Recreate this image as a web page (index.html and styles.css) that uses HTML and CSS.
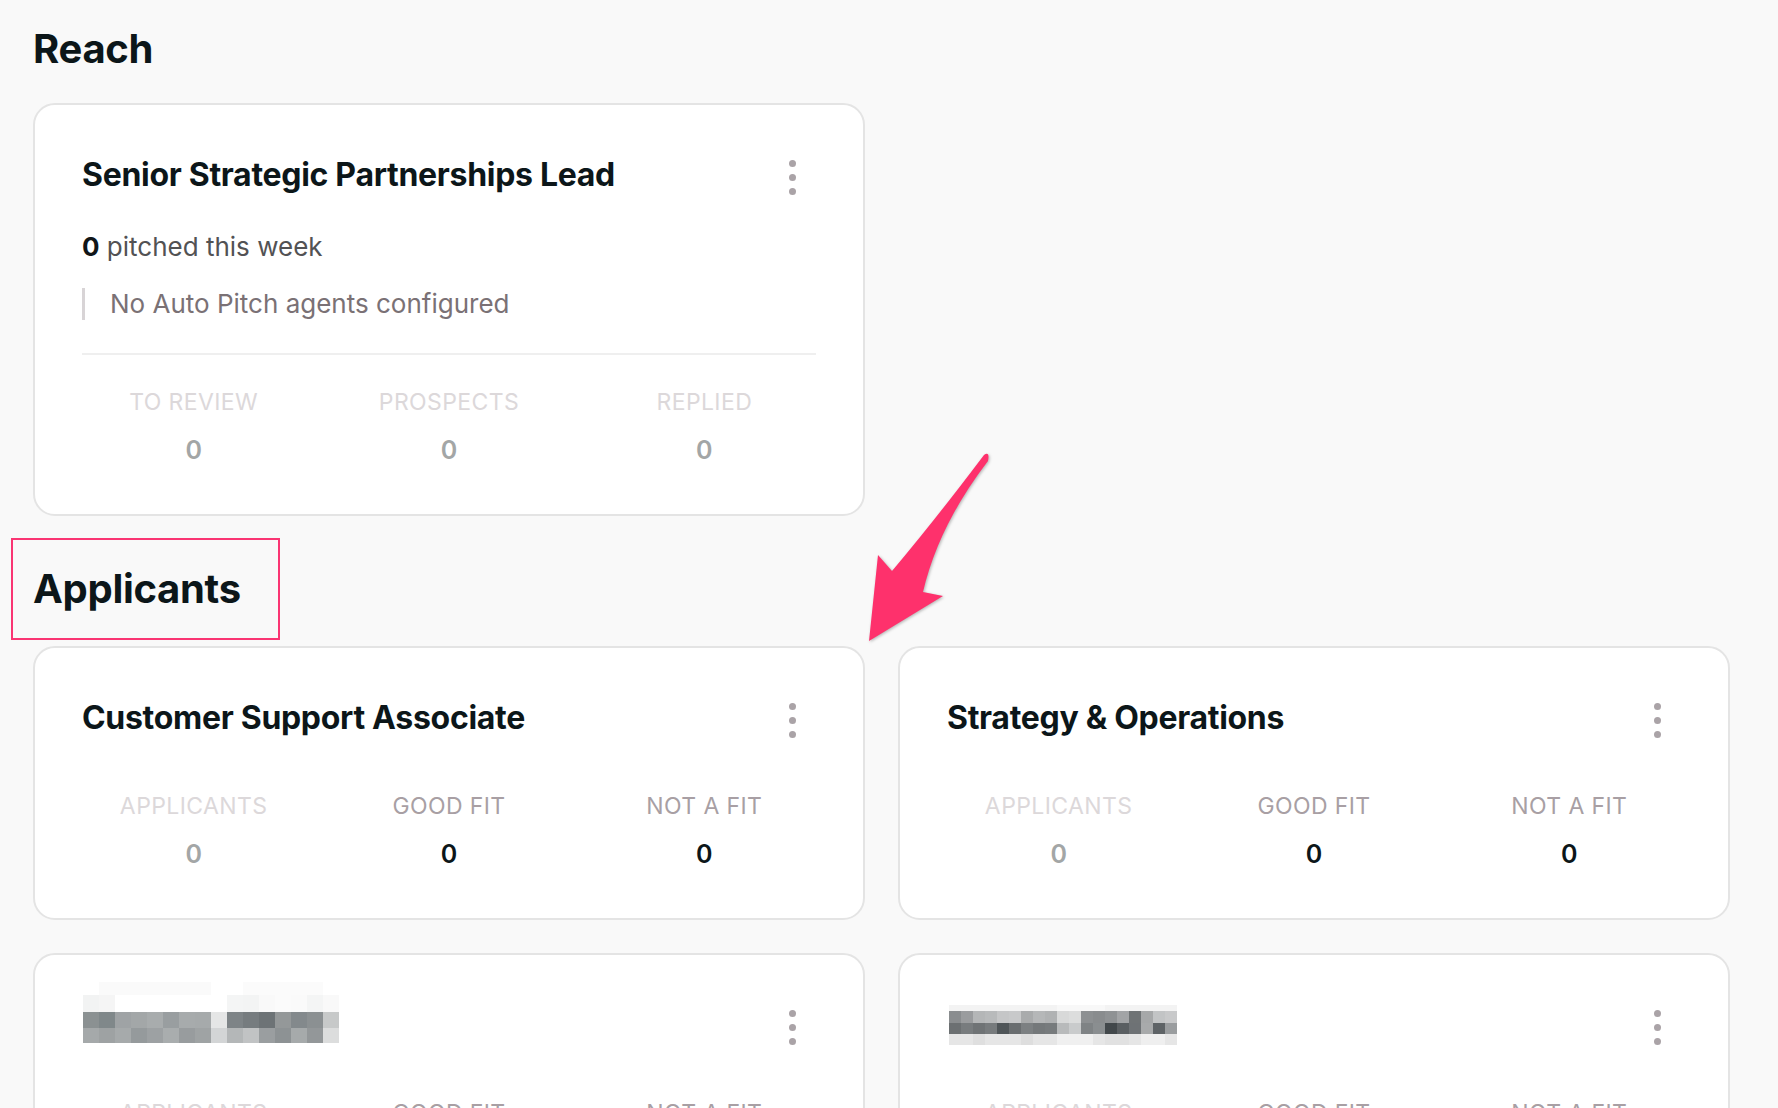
FILE: index.html
```html
<!DOCTYPE html>
<html lang="en">
<head>
<meta charset="utf-8">
<title>Jobs</title>
<link rel="stylesheet" href="styles.css">
</head>
<body>
<main class="page">
  <section class="section">
    <h2 class="section-title">Reach</h2>
    <div class="card-grid">
      <article class="card">
        <header class="card-head">
          <h3 class="card-title">Senior Strategic Partnerships Lead</h3>
          <button class="kebab" aria-label="More"><span></span><span></span><span></span></button>
        </header>
        <p class="pitched"><strong>0</strong> pitched this week</p>
        <p class="agents">No Auto Pitch agents configured</p>
        <hr class="divider">
        <div class="stats stats--divided">
          <div class="stat"><div class="stat-label">To Review</div><div class="stat-value">0</div></div>
          <div class="stat"><div class="stat-label">Prospects</div><div class="stat-value">0</div></div>
          <div class="stat"><div class="stat-label">Replied</div><div class="stat-value">0</div></div>
        </div>
      </article>
    </div>
  </section>

  <section class="section section--applicants">
    <div class="highlight">
      <h2 class="section-title section-title--flush">Applicants</h2>
    </div>
    <div class="card-grid">
      <article class="card">
        <header class="card-head">
          <h3 class="card-title">Customer Support Associate</h3>
          <button class="kebab" aria-label="More"><span></span><span></span><span></span></button>
        </header>
        <div class="stats">
          <div class="stat"><div class="stat-label">Applicants</div><div class="stat-value">0</div></div>
          <div class="stat"><div class="stat-label stat-label--strong">Good Fit</div><div class="stat-value stat-value--strong">0</div></div>
          <div class="stat"><div class="stat-label stat-label--strong">Not a Fit</div><div class="stat-value stat-value--strong">0</div></div>
        </div>
      </article>
      <article class="card">
        <header class="card-head">
          <h3 class="card-title">Strategy &amp; Operations</h3>
          <button class="kebab" aria-label="More"><span></span><span></span><span></span></button>
        </header>
        <div class="stats">
          <div class="stat"><div class="stat-label">Applicants</div><div class="stat-value">0</div></div>
          <div class="stat"><div class="stat-label stat-label--strong">Good Fit</div><div class="stat-value stat-value--strong">0</div></div>
          <div class="stat"><div class="stat-label stat-label--strong">Not a Fit</div><div class="stat-value stat-value--strong">0</div></div>
        </div>
      </article>
      <article class="card">
        <header class="card-head">
          <svg class="mosaic mosaic--left" width="256" height="64" viewBox="0 0 256 64" shape-rendering="crispEdges" aria-hidden="true">
            <rect x="16" y="3" width="112" height="13" fill="#fafafa"/>
            <rect x="160" y="3" width="80" height="13" fill="#fbfbfb"/>
            <rect x="0" y="16" width="16" height="17" fill="#f2f3f3"/>
            <rect x="16" y="16" width="16" height="17" fill="#f5f5f5"/>
            <rect x="144" y="16" width="16" height="17" fill="#f4f5f5"/>
            <rect x="160" y="16" width="16" height="17" fill="#f3f4f4"/>
            <rect x="176" y="16" width="16" height="17" fill="#f9f9f9"/>
            <rect x="192" y="16" width="16" height="17" fill="#fbfbfb"/>
            <rect x="208" y="16" width="16" height="17" fill="#fafafa"/>
            <rect x="224" y="16" width="16" height="17" fill="#f4f5f5"/>
            <rect x="240" y="16" width="16" height="17" fill="#f9f9f9"/>
            <rect x="0" y="33" width="16" height="16" fill="#8b9192"/>
            <rect x="16" y="33" width="16" height="16" fill="#80888a"/>
            <rect x="32" y="33" width="16" height="16" fill="#9fa3a5"/>
            <rect x="48" y="33" width="16" height="16" fill="#a3a7a8"/>
            <rect x="64" y="33" width="16" height="16" fill="#a8acad"/>
            <rect x="80" y="33" width="16" height="16" fill="#999ea0"/>
            <rect x="96" y="33" width="16" height="16" fill="#a7abac"/>
            <rect x="112" y="33" width="16" height="16" fill="#a6aaab"/>
            <rect x="128" y="33" width="16" height="16" fill="#e5e6e6"/>
            <rect x="144" y="33" width="16" height="16" fill="#7e8487"/>
            <rect x="160" y="33" width="16" height="16" fill="#767c7f"/>
            <rect x="176" y="33" width="16" height="16" fill="#6d7376"/>
            <rect x="192" y="33" width="16" height="16" fill="#949899"/>
            <rect x="208" y="33" width="16" height="16" fill="#83898c"/>
            <rect x="224" y="33" width="16" height="16" fill="#8b9092"/>
            <rect x="240" y="33" width="16" height="16" fill="#c7c9c9"/>
            <rect x="0" y="49" width="16" height="15" fill="#a5a9aa"/>
            <rect x="16" y="49" width="16" height="15" fill="#9ea2a3"/>
            <rect x="32" y="49" width="16" height="15" fill="#a6aaab"/>
            <rect x="48" y="49" width="16" height="15" fill="#959a9c"/>
            <rect x="64" y="49" width="16" height="15" fill="#9da1a3"/>
            <rect x="80" y="49" width="16" height="15" fill="#a9adae"/>
            <rect x="96" y="49" width="16" height="15" fill="#989c9e"/>
            <rect x="112" y="49" width="16" height="15" fill="#9fa3a4"/>
            <rect x="128" y="49" width="16" height="15" fill="#d3d5d6"/>
            <rect x="144" y="49" width="16" height="15" fill="#b4b7b8"/>
            <rect x="160" y="49" width="16" height="15" fill="#c1c3c4"/>
            <rect x="176" y="49" width="16" height="15" fill="#9a9ea0"/>
            <rect x="192" y="49" width="16" height="15" fill="#8d9294"/>
            <rect x="208" y="49" width="16" height="15" fill="#a6aaab"/>
            <rect x="224" y="49" width="16" height="15" fill="#939799"/>
            <rect x="240" y="49" width="16" height="15" fill="#dcdddd"/>
          </svg>
          <button class="kebab" aria-label="More"><span></span><span></span><span></span></button>
        </header>
        <div class="stats">
          <div class="stat"><div class="stat-label">Applicants</div><div class="stat-value">0</div></div>
          <div class="stat"><div class="stat-label stat-label--strong">Good Fit</div><div class="stat-value stat-value--strong">0</div></div>
          <div class="stat"><div class="stat-label stat-label--strong">Not a Fit</div><div class="stat-value stat-value--strong">0</div></div>
        </div>
      </article>
      <article class="card">
        <header class="card-head">
          <svg class="mosaic" width="228" height="40" viewBox="0 0 228 40" shape-rendering="crispEdges" aria-hidden="true">
            <rect x="0" y="0" width="228" height="6" fill="#f3f3f3"/>
            <rect x="108" y="0" width="48" height="6" fill="#f8f8f8"/>
            <rect x="0" y="6" width="12" height="12" fill="#8a8d8f"/>
            <rect x="12" y="6" width="12" height="12" fill="#9a9c9e"/>
            <rect x="24" y="6" width="12" height="12" fill="#b4b6b7"/>
            <rect x="36" y="6" width="12" height="12" fill="#b8babb"/>
            <rect x="48" y="6" width="12" height="12" fill="#c5c6c7"/>
            <rect x="60" y="6" width="12" height="12" fill="#c8c9ca"/>
            <rect x="72" y="6" width="12" height="12" fill="#a9abac"/>
            <rect x="84" y="6" width="12" height="12" fill="#b5b7b8"/>
            <rect x="96" y="6" width="12" height="12" fill="#b0b2b3"/>
            <rect x="108" y="6" width="12" height="12" fill="#d8d9d9"/>
            <rect x="120" y="6" width="12" height="12" fill="#dcdddd"/>
            <rect x="132" y="6" width="12" height="12" fill="#8d9092"/>
            <rect x="144" y="6" width="12" height="12" fill="#898c8e"/>
            <rect x="156" y="6" width="12" height="12" fill="#8f9294"/>
            <rect x="168" y="6" width="12" height="12" fill="#a2a4a6"/>
            <rect x="180" y="6" width="12" height="12" fill="#6f7375"/>
            <rect x="192" y="6" width="12" height="12" fill="#a6a8a9"/>
            <rect x="204" y="6" width="12" height="12" fill="#c2c4c5"/>
            <rect x="216" y="6" width="12" height="12" fill="#c8c9ca"/>
            <rect x="0" y="18" width="12" height="11" fill="#6c7072"/>
            <rect x="12" y="18" width="12" height="11" fill="#787c7e"/>
            <rect x="24" y="18" width="12" height="11" fill="#6f7375"/>
            <rect x="36" y="18" width="12" height="11" fill="#777b7d"/>
            <rect x="48" y="18" width="12" height="11" fill="#4f5558"/>
            <rect x="60" y="18" width="12" height="11" fill="#6a6e70"/>
            <rect x="72" y="18" width="12" height="11" fill="#7c8082"/>
            <rect x="84" y="18" width="12" height="11" fill="#74787a"/>
            <rect x="96" y="18" width="12" height="11" fill="#777b7d"/>
            <rect x="108" y="18" width="12" height="11" fill="#b8babb"/>
            <rect x="120" y="18" width="12" height="11" fill="#c9cbcc"/>
            <rect x="132" y="18" width="12" height="11" fill="#7f8385"/>
            <rect x="144" y="18" width="12" height="11" fill="#8a8e90"/>
            <rect x="156" y="18" width="12" height="11" fill="#42484b"/>
            <rect x="168" y="18" width="12" height="11" fill="#5a5f62"/>
            <rect x="180" y="18" width="12" height="11" fill="#6e7275"/>
            <rect x="192" y="18" width="12" height="11" fill="#a8aaab"/>
            <rect x="204" y="18" width="12" height="11" fill="#5e6366"/>
            <rect x="216" y="18" width="12" height="11" fill="#9a9d9f"/>
            <rect x="0" y="29" width="228" height="11" fill="#e6e6e6"/>
            <rect x="24" y="29" width="12" height="11" fill="#dfdfdf"/>
            <rect x="72" y="29" width="12" height="11" fill="#dedede"/>
            <rect x="108" y="29" width="36" height="11" fill="#f0f0f0"/>
            <rect x="156" y="29" width="24" height="11" fill="#e1e1e1"/>
            <rect x="192" y="29" width="24" height="11" fill="#efefef"/>
          </svg>
          <button class="kebab" aria-label="More"><span></span><span></span><span></span></button>
        </header>
        <div class="stats">
          <div class="stat"><div class="stat-label">Applicants</div><div class="stat-value">0</div></div>
          <div class="stat"><div class="stat-label stat-label--strong">Good Fit</div><div class="stat-value stat-value--strong">0</div></div>
          <div class="stat"><div class="stat-label stat-label--strong">Not a Fit</div><div class="stat-value stat-value--strong">0</div></div>
        </div>
      </article>
    </div>
  </section>

  <svg class="arrow" viewBox="850 440 160 220" aria-hidden="true">
    <path d="M 984 455 Q 935 520 892 571 L 878 555 L 869 641 L 943 596 L 923 592 Q 938.5 525.5 988 461 Q 990 451 984 455 Z" fill="#fe316c"/>
  </svg>
</main>
</body>
</html>
```

FILE: styles.css
```css
html, body {
  margin: 0;
  height: 100%;
  overflow: hidden;
}

body {
  background: #f9f9f9;
  color: #0c1619;
  font-family: Inter, "Liberation Sans", Arial, sans-serif;
}

.page {
  position: relative;
  padding: 26px 47px 0 33px;
}

.section-title {
  margin: 0 0 31px;
  font-size: 40px;
  line-height: 46px;
  font-weight: 700;
  letter-spacing: -0.3px;
  color: #0c1619;
}

.section--applicants {
  margin-top: 50px;
}

.section-title--flush {
  margin: 0;
}

.highlight {
  position: relative;
  margin-bottom: 34px;
}

.highlight::after {
  content: "";
  position: absolute;
  left: -22px;
  top: -28px;
  width: 269px;
  height: 102px;
  box-sizing: border-box;
  border: 2px solid #fa3573;
}

.card-grid {
  display: grid;
  grid-template-columns: repeat(2, 832px);
  gap: 33px;
}

.card {
  box-sizing: border-box;
  background: #ffffff;
  border: 2px solid #e4e4e4;
  border-radius: 22px;
  padding: 50px 47px 49px;
}

.card-head {
  display: flex;
  align-items: center;
  justify-content: space-between;
  height: 40px;
}

.card-title {
  margin: 0;
  font-size: 32px;
  line-height: 40px;
  font-weight: 700;
  letter-spacing: -0.3px;
  color: #0c1619;
  white-space: nowrap;
}

.mosaic {
  display: block;
  flex: none;
  margin-left: 2px;
}

.mosaic--left {
  align-self: flex-start;
  margin-top: -26px;
  margin-left: 1px;
}

.kebab {
  flex: none;
  width: 48px;
  height: 40px;
  padding: 4px 0 0;
  border: 0;
  background: transparent;
  display: flex;
  flex-direction: column;
  align-items: center;
  justify-content: center;
  gap: 7px;
  cursor: pointer;
}

.kebab span {
  display: block;
  width: 7px;
  height: 7px;
  border-radius: 50%;
  background: #aaa3a7;
}

.pitched {
  margin: 34px 0 0;
  font-size: 26px;
  line-height: 36px;
  color: #525254;
}

.pitched strong {
  font-weight: 700;
  color: #111618;
}

.agents {
  margin: 23px 0 0;
  font-size: 26px;
  line-height: 32px;
  color: #7a7175;
  border-left: 3px solid #d8d4d6;
  padding-left: 25px;
}

.divider {
  margin: 33px 0 0;
  border: 0;
  height: 2px;
  background: #efefef;
}

.stats {
  display: grid;
  grid-template-columns: repeat(3, 1fr);
  margin: 54px -16px 0;
  text-align: center;
}

.stats--divided {
  margin-top: 33px;
}

.stat-label {
  font-size: 23px;
  line-height: 28px;
  font-weight: 400;
  text-transform: uppercase;
  letter-spacing: 0.4px;
  color: #dcd8da;
}

.stat-label--strong {
  color: #a89fa4;
}

.stat-value {
  margin-top: 19px;
  font-size: 25px;
  line-height: 30px;
  font-weight: 600;
  color: #a3a6a6;
}

.stat-value--strong {
  color: #0c1619;
}

.arrow {
  position: absolute;
  left: 850px;
  top: 440px;
  width: 160px;
  height: 220px;
  pointer-events: none;
  filter: drop-shadow(1px 1px 1.5px rgba(0, 0, 0, 0.28));
}
```
